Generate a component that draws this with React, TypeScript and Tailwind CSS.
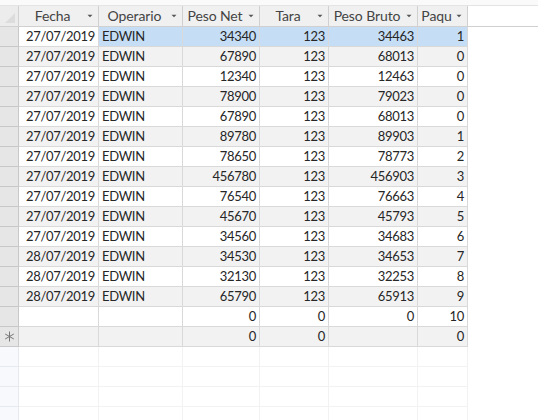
import React from "react";

type Row = {
  fecha: string;
  operario: string;
  neto: string;
  tara: string;
  bruto: string;
  paqu: string;
};

const rows: Row[] = [
  { fecha: "27/07/2019", operario: "EDWIN", neto: "34340", tara: "123", bruto: "34463", paqu: "1" },
  { fecha: "27/07/2019", operario: "EDWIN", neto: "67890", tara: "123", bruto: "68013", paqu: "0" },
  { fecha: "27/07/2019", operario: "EDWIN", neto: "12340", tara: "123", bruto: "12463", paqu: "0" },
  { fecha: "27/07/2019", operario: "EDWIN", neto: "78900", tara: "123", bruto: "79023", paqu: "0" },
  { fecha: "27/07/2019", operario: "EDWIN", neto: "67890", tara: "123", bruto: "68013", paqu: "0" },
  { fecha: "27/07/2019", operario: "EDWIN", neto: "89780", tara: "123", bruto: "89903", paqu: "1" },
  { fecha: "27/07/2019", operario: "EDWIN", neto: "78650", tara: "123", bruto: "78773", paqu: "2" },
  { fecha: "27/07/2019", operario: "EDWIN", neto: "456780", tara: "123", bruto: "456903", paqu: "3" },
  { fecha: "27/07/2019", operario: "EDWIN", neto: "76540", tara: "123", bruto: "76663", paqu: "4" },
  { fecha: "27/07/2019", operario: "EDWIN", neto: "45670", tara: "123", bruto: "45793", paqu: "5" },
  { fecha: "27/07/2019", operario: "EDWIN", neto: "34560", tara: "123", bruto: "34683", paqu: "6" },
  { fecha: "28/07/2019", operario: "EDWIN", neto: "34530", tara: "123", bruto: "34653", paqu: "7" },
  { fecha: "28/07/2019", operario: "EDWIN", neto: "32130", tara: "123", bruto: "32253", paqu: "8" },
  { fecha: "28/07/2019", operario: "EDWIN", neto: "65790", tara: "123", bruto: "65913", paqu: "9" },
  { fecha: "", operario: "", neto: "0", tara: "0", bruto: "0", paqu: "10" },
  { fecha: "", operario: "", neto: "0", tara: "0", bruto: "", paqu: "0" },
];

const cols = [
  { key: "fecha", label: "Fecha", w: "w-[80px]", align: "text-right" },
  { key: "operario", label: "Operario", w: "w-[84px]", align: "text-left" },
  { key: "neto", label: "Peso Net", w: "w-[77px]", align: "text-right" },
  { key: "tara", label: "Tara", w: "w-[69px]", align: "text-right" },
  { key: "bruto", label: "Peso Bruto", w: "w-[89px]", align: "text-right" },
  { key: "paqu", label: "Paqu", w: "w-[50px]", align: "text-right" },
] as const;

const Arrow = () => (
  <svg width="6" height="4" viewBox="0 0 6 4" className="shrink-0">
    <path d="M0.5 0.8 L3 3.3 L5.5 0.8 Z" fill="#555" />
  </svg>
);

const Star = () => (
  <svg width="11" height="11" viewBox="0 0 11 11">
    <g stroke="#777" strokeWidth="1">
      <line x1="5.5" y1="0.5" x2="5.5" y2="10.5" />
      <line x1="1.2" y1="3" x2="9.8" y2="8" />
      <line x1="1.2" y1="8" x2="9.8" y2="3" />
    </g>
  </svg>
);

export default function App() {
  return (
    <div
      className="w-[538px] h-[420px] overflow-hidden bg-white text-[13px] tracking-[-0.3px] text-[#262626]"
      style={{ fontFamily: "Lato, 'Open Sans', sans-serif" }}
    >
      <div className="h-[6px] border-b border-[#e4e4e4] bg-[#fafafa]" />
      {/* header */}
      <div className="flex h-[21px] border-b border-[#d0d0d0]">
        <div className="w-[19px] shrink-0 bg-[#ececec] border-r border-[#d0d0d0] relative overflow-hidden">
          <svg width="19" height="20" className="absolute inset-0">
            <path d="M5 17 L15 17 L15 7 Z" fill="#dcdcdc" />
          </svg>
        </div>
        {cols.map(c => (
          <div
            key={c.key}
            className={`${c.w} shrink-0 bg-[#f0f0f0] border-r border-[#d0d0d0] flex items-center gap-[3px] pl-[2px] pr-[5px] text-[14px] tracking-[-0.1px] text-[#444] leading-none`}
          >
            <span className="flex-1 text-center whitespace-nowrap">{c.label}</span>
            <Arrow />
          </div>
        ))}
        <div className="flex-1 bg-white" />
      </div>
      {/* rows */}
      {rows.map((r, i) => {
        const selected = i === 0;
        const stripe = i % 2 === 1 ? "bg-[#f2f2f2]" : "bg-white";
        return (
          <div key={i} className="flex h-[20px]">
            <div className="w-[19px] shrink-0 border-r border-b border-[#c8c8c8] bg-[#e6e6e6] flex items-center justify-center">
              {i === rows.length - 1 ? <Star /> : null}
            </div>
            {cols.map((c, ci) => {
              let bg = stripe;
              if (selected) bg = ci === 0 ? "bg-white" : "bg-[#c5def5]";
              return (
                <div
                  key={c.key}
                  className={`${c.w} shrink-0 ${bg} ${c.align} border-r border-b border-[#d9d9d9] px-[3px] leading-[19px] whitespace-nowrap overflow-hidden`}
                >
                  {r[c.key]}
                </div>
              );
            })}
            <div className="flex-1" />
          </div>
        );
      })}
      {/* empty area with faint grid */}
      {Array.from({ length: 4 }).map((_, i) => (
        <div key={i} className="flex h-[20px]">
          <div className="w-[19px] shrink-0 bg-[#f7f9fc] border-r border-b border-[#e6e9ee]" />
          {cols.map(c => (
            <div key={c.key} className={`${c.w} shrink-0 border-r border-b border-[#f2f2f2]`} />
          ))}
          <div className="flex-1" />
        </div>
      ))}
    </div>
  );
}
